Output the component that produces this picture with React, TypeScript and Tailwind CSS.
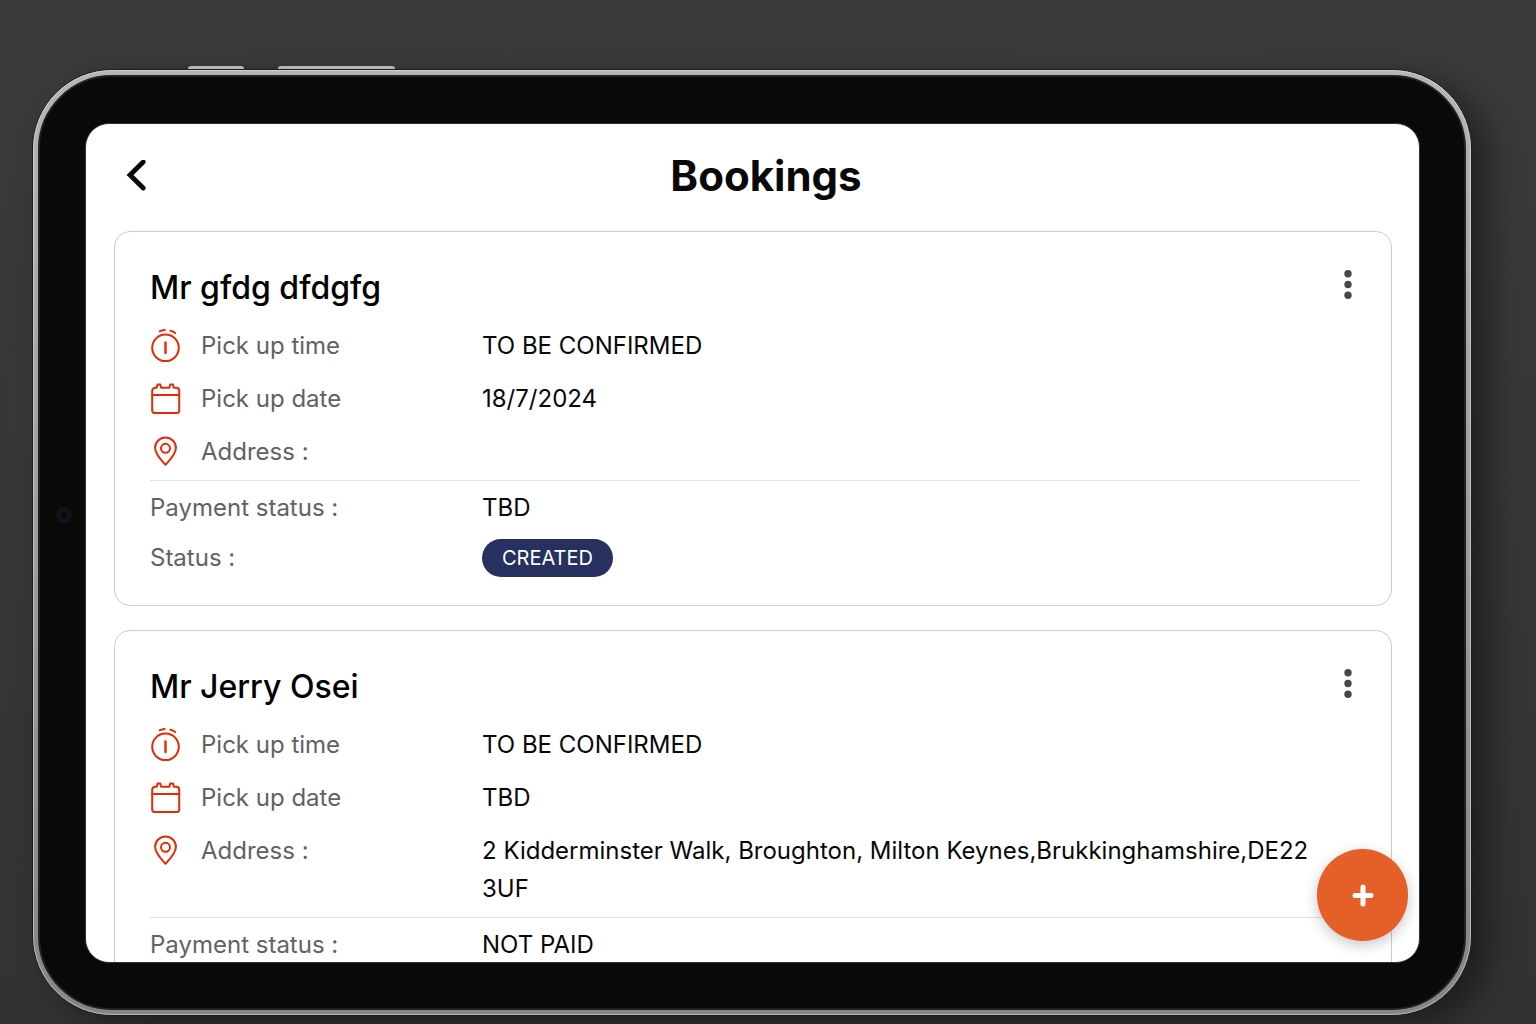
import type { ReactNode } from "react";

type Booking = {
  name: string;
  time: string;
  date: string;
  address: string;
  payment: string;
  status?: string;
};

const bookings: Booking[] = [
  {
    name: "Mr gfdg dfdgfg",
    time: "TO BE CONFIRMED",
    date: "18/7/2024",
    address: "",
    payment: "TBD",
    status: "CREATED",
  },
  {
    name: "Mr Jerry Osei",
    time: "TO BE CONFIRMED",
    date: "TBD",
    address: "2 Kidderminster Walk, Broughton, Milton Keynes,Brukkinghamshire,DE22 3UF",
    payment: "NOT PAID",
  },
];

const iconProps = {
  width: 32,
  height: 38,
  viewBox: "0 0 32 38",
  fill: "none",
  stroke: "#e42b06",
  strokeWidth: 2,
  strokeLinecap: "round" as const,
  strokeLinejoin: "round" as const,
  "aria-hidden": true,
};

function TimerIcon() {
  return (
    <svg {...iconProps}>
      <circle cx="15.5" cy="20.8" r="13.3" />
      <path d="M15.5 15.500v10.500" strokeWidth="2.400" />
      <path d="M9.800 4.200Q12 3.100 14.800 2.900M20.500 3.700Q23.500 4.300 25.300 6.100" strokeWidth="2" />
    </svg>
  );
}

function CalendarIcon() {
  return (
    <svg {...iconProps}>
      <path d="M2.200 30.500V10.800A3 3 0 0 1 5.200 7.800H6.700L7.500 4.600H10.300L11.100 7.800H19.400L20.200 4.600H23L23.800 7.800H26.200A3 3 0 0 1 29.200 10.800V30.500A2.500 2.500 0 0 1 26.700 33H4.700A2.500 2.500 0 0 1 2.200 30.500Z" />
      <path d="M2.200 15H29.200" />
    </svg>
  );
}

function PinIcon() {
  return (
    <svg {...iconProps}>
      <path d="M15.500 31.800C13 28.800 5.100 21.800 5.100 14.800A10.400 10.400 0 0 1 25.900 14.800C25.900 21.800 18 28.800 15.500 31.800Z" />
      <circle cx="15.500" cy="15.300" r="4.500" />
    </svg>
  );
}

function Field({ icon, label, children }: { icon?: ReactNode; label: string; children?: ReactNode }) {
  return (
    <div className="flex items-start text-2xl leading-[38px]">
      <dt className="flex w-[332px] shrink-0 items-center text-[#626262]">
        {icon && <span className="mr-[19px] shrink-0">{icon}</span>}
        {label}
      </dt>
      <dd className="min-w-0 flex-1 text-[#080808]">{children}</dd>
    </div>
  );
}

function BookingCard({ booking }: { booking: Booking }) {
  return (
    <article className="rounded-2xl border border-[#cbcbcb] pt-[33px] pr-8 pb-7 pl-[35px]">
      <header className="flex items-start justify-between">
        <h2 className="text-[32px] leading-[46px] font-medium text-black">{booking.name}</h2>
        <button type="button" aria-label={`Options for ${booking.name}`} className="mt-1 flex h-8 w-[22px] items-center justify-center">
          <svg width="8" height="32" viewBox="0 0 8 32" fill="#474747" aria-hidden="true">
            <circle cx="4" cy="4.800" r="3.700" />
            <circle cx="4" cy="15.500" r="3.700" />
            <circle cx="4" cy="26.200" r="3.700" />
          </svg>
        </button>
      </header>
      <dl className="mt-4">
        <div className="flex flex-col gap-[15px] border-b border-[#e2e2e2] pb-[9px]">
          <Field icon={<TimerIcon />} label="Pick up time">{booking.time}</Field>
          <Field icon={<CalendarIcon />} label="Pick up date">{booking.date}</Field>
          <Field icon={<PinIcon />} label="Address :">{booking.address}</Field>
        </div>
        <div className="flex flex-col gap-3 pt-2">
          <Field label="Payment status :">{booking.payment}</Field>
          {booking.status && (
            <Field label="Status :">
              <span className="inline-block rounded-full bg-[#26315f] px-5 align-top text-xl leading-[38px] text-white">{booking.status}</span>
            </Field>
          )}
        </div>
      </dl>
    </article>
  );
}

export default function App() {
  return (
    <div className="flex h-screen flex-col overflow-hidden bg-linear-to-b from-[#3b3b3b] to-[#323232] pt-[66px] pr-16 pb-2 pl-8 font-['Inter',sans-serif]">
      <div className="flex h-[3px] shrink-0 items-end gap-[34px] pl-[156px]">
        <div className="h-[3px] w-14 rounded-t-sm bg-[#c9c9c9]" />
        <div className="h-[3px] w-[117px] rounded-t-sm bg-[#c9c9c9]" />
      </div>
      <div className="flex min-h-0 flex-1 rounded-[80px] border border-[#1c1c1c] bg-linear-to-b from-[#b5b5b5] to-[#858585] shadow-[18px_10px_32px_rgba(0,0,0,0.4)]">
        <div className="flex min-h-0 min-w-0 flex-1 rounded-[79px] border border-white/40 p-1">
          <div className="flex min-h-0 min-w-0 flex-1 items-center rounded-[74px] border-2 border-[#202020] bg-[#090909] pt-[46px] pr-[44px] pb-[45px] pl-4">
            <div className="mr-[13px] mb-14 flex size-4 shrink-0 items-center justify-center rounded-full bg-[#10141b]">
              <div className="size-[6px] rounded-full bg-[#06080c]" />
            </div>
            <div className="relative h-full min-w-0 flex-1 overflow-hidden rounded-3xl border border-[#333333] bg-white">
              <header className="grid grid-cols-[1fr_auto_1fr] items-center pt-5 pr-2 pb-[23px] pl-[35px]">
                <button type="button" aria-label="Back" className="flex size-8 items-center justify-center">
                  <svg width="32" height="32" viewBox="0 0 32 32" fill="none" stroke="#080808" strokeWidth="4.800" strokeLinecap="round" strokeLinejoin="miter" aria-hidden="true">
                    <path d="M22.200 2 9 15l13.200 13" />
                  </svg>
                </button>
                <h1 className="text-[42px] leading-[64px] font-bold text-[#080808]">Bookings</h1>
                <span />
              </header>
              <main className="flex flex-col gap-6 pr-[27px] pl-7">
                {bookings.map((booking) => (
                  <BookingCard key={booking.name} booking={booking} />
                ))}
              </main>
              <button
                type="button"
                aria-label="Add booking"
                className="absolute right-[11px] bottom-[21px] flex h-[92px] w-[91px] items-center justify-center rounded-full bg-[#e55f29] shadow-[0_4px_14px_rgba(0,0,0,0.22)]"
              >
                <svg width="24" height="24" viewBox="0 0 24 24" fill="none" stroke="white" strokeWidth="5" strokeLinecap="round" aria-hidden="true">
                  <path d="M12 4v17M4 12.500h16" />
                </svg>
              </button>
            </div>
          </div>
        </div>
      </div>
    </div>
  );
}
